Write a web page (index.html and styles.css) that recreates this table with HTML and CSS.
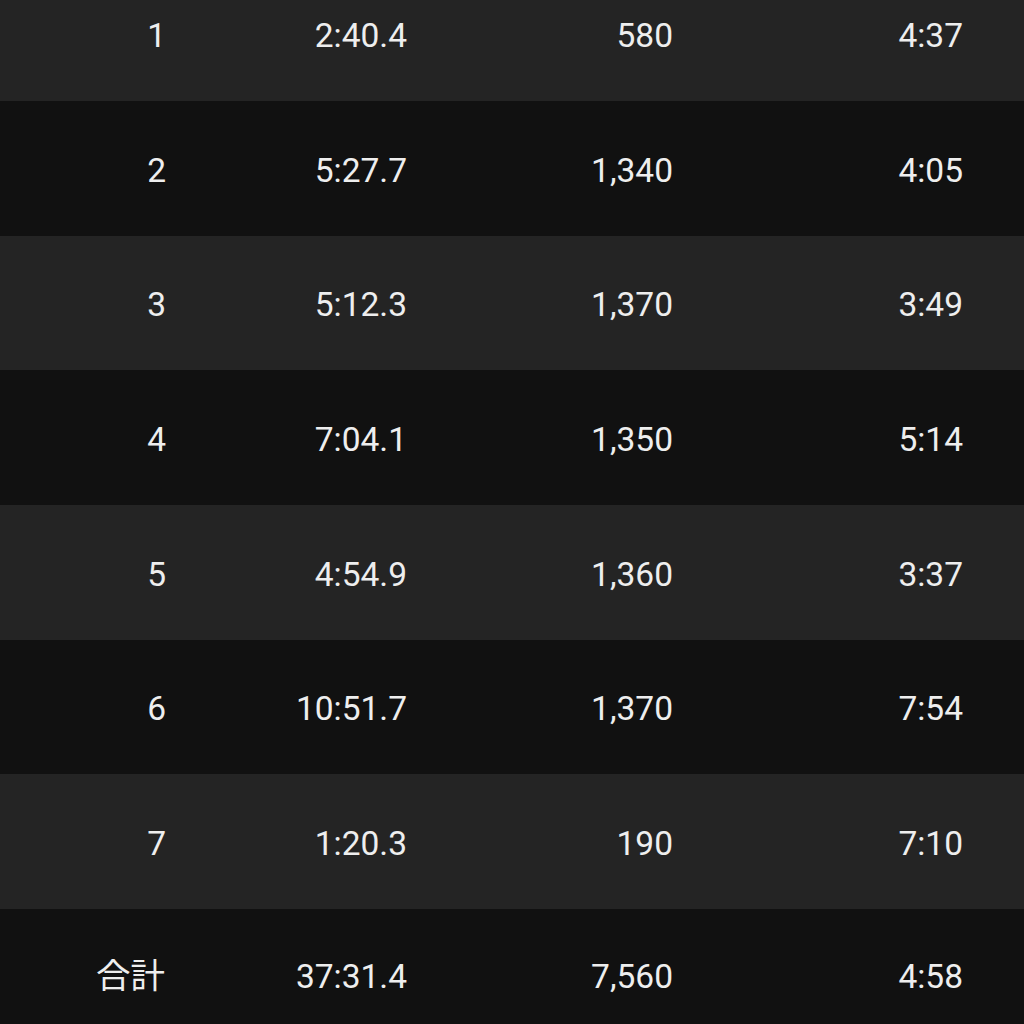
FILE: index.html
```html
<!DOCTYPE html>
<html lang="ja">
<head>
<meta charset="utf-8">
<link rel="stylesheet" href="styles.css">
</head>
<body>
<div class="table">
  <div class="row light"><span>1</span><span>2:40.4</span><span>580</span><span>4:37</span></div>
  <div class="row dark"><span>2</span><span>5:27.7</span><span>1,340</span><span>4:05</span></div>
  <div class="row light"><span>3</span><span>5:12.3</span><span>1,370</span><span>3:49</span></div>
  <div class="row dark"><span>4</span><span>7:04.1</span><span>1,350</span><span>5:14</span></div>
  <div class="row light"><span>5</span><span>4:54.9</span><span>1,360</span><span>3:37</span></div>
  <div class="row dark"><span>6</span><span>10:51.7</span><span>1,370</span><span>7:54</span></div>
  <div class="row light"><span>7</span><span>1:20.3</span><span>190</span><span>7:10</span></div>
  <div class="row dark total"><span class="cjk">合計</span><span>37:31.4</span><span>7,560</span><span>4:58</span></div>
</div>
</body>
</html>
```
FILE: styles.css
```css
html, body {
  margin: 0;
  padding: 0;
  background: #111111;
  overflow: hidden;
}
.table {
  margin-top: -33.67px;
  font-family: Roboto, "Noto Sans CJK JP", sans-serif;
  font-size: 33.5px;
  color: #eeeeee;
}
.row {
  display: grid;
  grid-template-columns: 166px 241px 266px 290px;
  height: 134.67px;
  align-items: center;
  padding-top: 4px;
  box-sizing: border-box;
}
.row span {
  text-align: right;
  line-height: 1;
}
.row .cjk {
  font-size: 34.5px;
  padding-right: 1px;
}
.light { background: #242424; }
.dark { background: #111111; }
.total { padding-top: 0; }
```
